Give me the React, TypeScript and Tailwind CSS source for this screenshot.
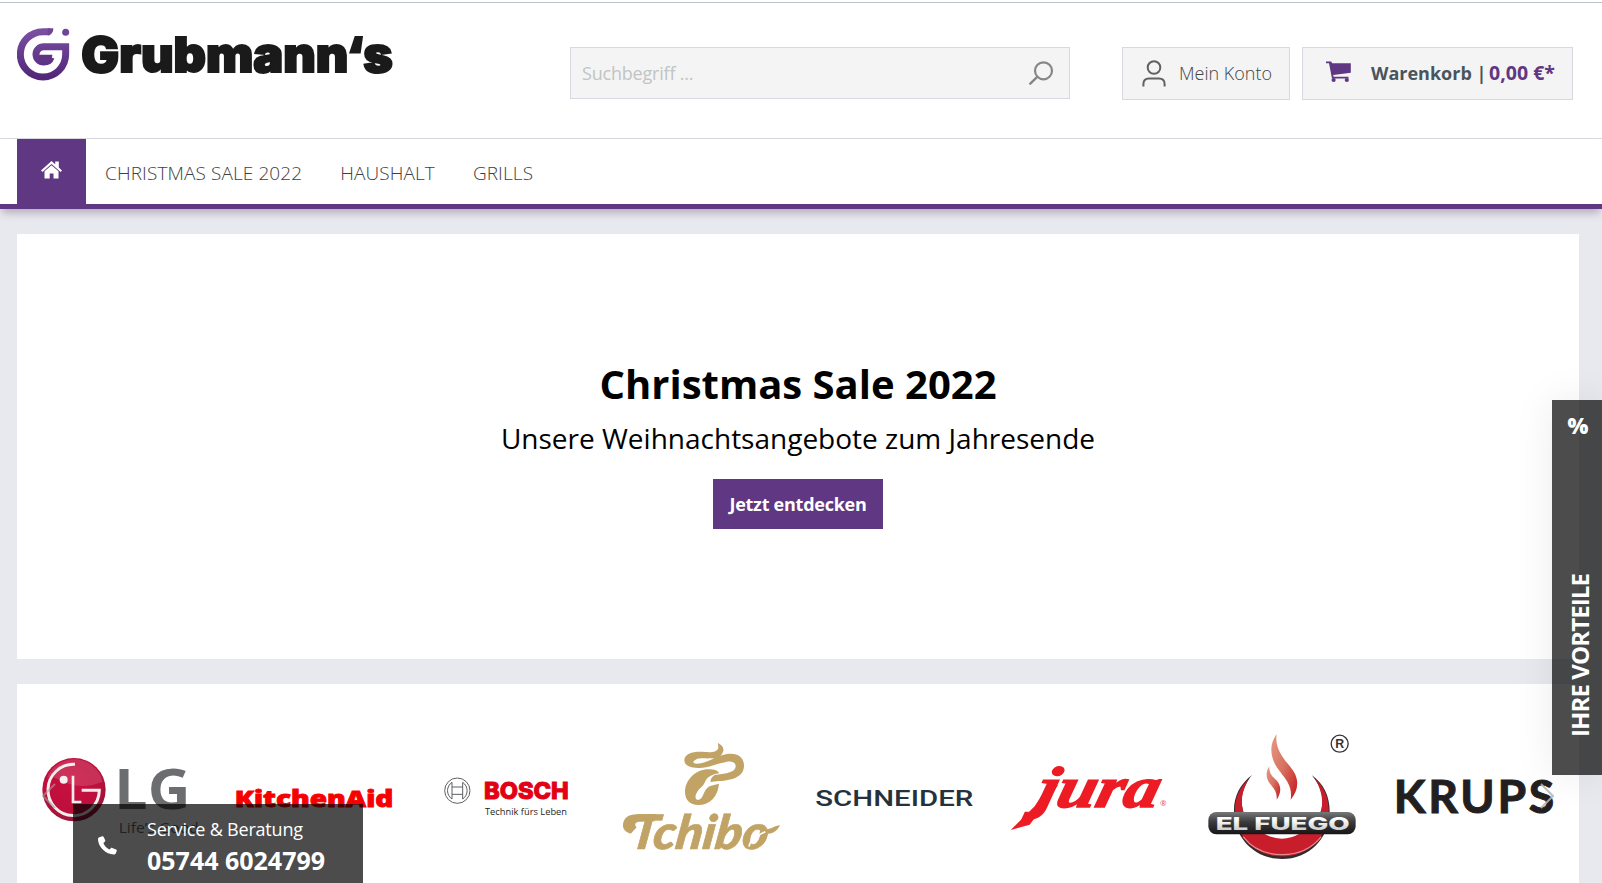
import type { ReactNode } from "react";

const navItems = ["CHRISTMAS SALE 2022", "HAUSHALT", "GRILLS"];

function GrubmannsLogo() {
  return (
    <svg viewBox="0 0 1140 180" className="h-[60px] w-[380px]" aria-label="Grubmann's">
      <defs>
        <linearGradient id="logo" x1="0" y1="0" x2="0" y2="1">
          <stop offset="0" stopColor="#7a4ea0" />
          <stop offset="1" stopColor="#52277a" />
        </linearGradient>
      </defs>
      <path
        d="M98 20H78a68 68 0 1 0 68 68V65H80a23 23 0 1 0 0 46c12 0 19-5 22-14"
        fill="none"
        stroke="url(#logo)"
        strokeWidth="21"
      />
      <path fill="#6f4596" d="M92 9.500h17c0 13-7 21-17 21z" />
      <path fill="#5f3385" d="M68 89h38c0 6-2 11-5 15H68c-3-5-3-11 0-15z" />
      <circle cx="146" cy="22" r="10.500" fill="#6f4596" />
      <text
        x="193"
        y="142"
        textLength="934"
        lengthAdjust="spacingAndGlyphs"
        fill="#1a1a1a"
        stroke="#1a1a1a"
        strokeWidth="6"
        className="font-['Inter',sans-serif] text-[144px] font-black"
      >
        Grubmann‘s
      </text>
    </svg>
  );
}

function HomeIcon() {
  return (
    <svg viewBox="0 0 21 18" className="h-[18px] w-[21px]" fill="#fff">
      <path d="M10.500 0 14.200 3.200V.5h3.600v6l3.200 2.900-1.400 1.500-9.100-8-9.100 8L0 9.400z" />
      <path d="M10.500 4.200l7 6.100V17.500h-5v-5H8.700v5H3.500v-7.200z" />
    </svg>
  );
}

function UserIcon() {
  return (
    <svg viewBox="0 0 24 27" className="h-[27px] w-6" fill="none" stroke="#5f6163" strokeWidth="2">
      <circle cx="12" cy="7.500" r="6.300" />
      <path d="M1.400 26.500v-2.500c0-3.500 2-5.500 5.500-5.500h10.200c3.500 0 5.500 2 5.500 5.500v2.500" />
    </svg>
  );
}

function CartIcon() {
  return (
    <svg viewBox="0 0 25 22" className="h-[22px] w-[25px]" fill="#5f3782">
      <path d="M0 .5h5.300l.7 1.800h18.800v9.400L7.200 14l.4 1.700h14.900v1.800H6L3 2.300H0z" />
      <circle cx="7.600" cy="19" r="2.100" />
      <circle cx="20.800" cy="19" r="2.100" />
    </svg>
  );
}

function SearchIcon() {
  return (
    <svg viewBox="0 0 25 24" className="h-6 w-[25px]" fill="none" stroke="#868686" strokeWidth="2.200">
      <circle cx="14.500" cy="9.800" r="8.500" />
      <path d="M8 16.200 1.300 22.700" strokeWidth="2.400" strokeLinecap="round" />
    </svg>
  );
}

function PhoneIcon() {
  return (
    <svg viewBox="0 0 19 19" className="size-[19px]" fill="#fff">
      <path d="M1.400 1.300 4.200.2c.7-.2 1.200 0 1.500.7l1.500 3.300c.2.600.1 1.100-.4 1.500L5.400 7c1 2.800 3 5.100 6 6.500l1.500-1.300c.4-.4.900-.4 1.400-.2l3.800 1.600c.6.300.8.700.6 1.300l-.8 2.300c-.2.700-.8 1.100-1.500 1.200C8.500 18.800.2 11.500 0 3.300c0-.9.500-1.700 1.400-2z" />
    </svg>
  );
}

function Brand({ box, children }: { box: string; children: ReactNode }) {
  return (
    <svg viewBox={box} className="size-[157px] shrink-0 overflow-visible">
      {children}
    </svg>
  );
}

function Brands() {
  return (
    <div className="flex justify-between px-[25px] pt-9">
      <Brand box="66 -30 471 471">
        <defs>
          <radialGradient id="lg" cx=".45" cy=".4" r=".65">
            <stop offset="0" stopColor="#c9103f" />
            <stop offset=".7" stopColor="#bd0f3c" />
            <stop offset="1" stopColor="#8f1438" />
          </radialGradient>
        </defs>
        <circle cx="162" cy="179" r="95" fill="url(#lg)" />
        <path d="M80 145a88 88 0 0 1 168 10q-70 30-140-10-20-8-28 0" fill="#fff" opacity=".14" />
        <g fill="none" stroke="#f2eeee" strokeWidth="9">
          <path d="M165 103a77 77 0 1 0 73 78H185" />
          <path d="M159 137v79h25" strokeWidth="8" />
        </g>
        <circle cx="131" cy="149" r="12" fill="#f5f1f1" />
        <text x="283" y="238" textLength="228" lengthAdjust="spacingAndGlyphs" fill="#6b6d70" className="font-['Open_Sans',sans-serif] text-[169px] font-bold">LG</text>
        <text x="296" y="310" textLength="240" lengthAdjust="spacingAndGlyphs" fill="#6b6d70" className="font-['Open_Sans',sans-serif] text-[46px]">Life’s Good</text>
      </Brand>

      <Brand box="647 -30 471 471">
        <text x="643" y="230" textLength="476" lengthAdjust="spacingAndGlyphs" fill="#f80000" stroke="#f80000" strokeWidth="2.500" className="font-['Open_Sans',sans-serif] text-[66px] font-extrabold">KitchenAid</text>
      </Brand>

      <Brand box="27 -30 471 471">
        <g fill="none" stroke="#5d6164" strokeWidth="3">
          <circle cx="112" cy="182" r="38" />
          <path d="M96 157a30 30 0 0 0 0 50zM128 157a30 30 0 0 1 0 50zM96 171h32M96 193h32" />
        </g>
        <text x="192" y="207" textLength="254" lengthAdjust="spacingAndGlyphs" fill="#e20015" stroke="#e20015" strokeWidth="3" className="font-['Inter',sans-serif] text-[70px] font-extrabold">BOSCH</text>
        <text x="195" y="255" textLength="246" lengthAdjust="spacingAndGlyphs" fill="#1c1f22" className="font-['Open_Sans',sans-serif] text-[28px]">Technik fürs Leben</text>
      </Brand>

      <Brand box="608 -30 471 471">
        <g fill="#c2a366">
          <path d="M893 39c14 8 20 17 14 29-5 11-17 17-36 17-20 1-33-2-45 4-10 5-9 12 3 12 30 0 55-22 91-29 31-5 51 9 51 35 0 31-31 44-76 46l-24 3c-2-7 4-16 12-21l27-4c24-3 36-11 36-23 0-11-12-16-29-12-29 5-53 19-84 18-25-1-41-8-41-23 0-22 30-28 64-25 19 2 37-2 38-13 1-5-2-8-1-14z" />
          <path d="M865 118c17 0 29 4 31 12-25 4-37 14-41 24-6 16-16 19-21 27-8 11-11 20-6 27 6 5 15 0 20-12 6-14 12-25 22-28l26-7c-3 36-25 64-63 64-23 0-39-15-39-39 0-36 32-68 71-68z" />
          <path d="M608 285c1-22 19-34 47-32l53-1-5 22-43 1c-15 0-19 7-11 17l-18 19c-14-4-24-13-23-26z" />
          <path d="M1030 297c22 4 31-10 49-11-7 14-19 25-35 25l-28 3c2-8 6-14 14-17z" />
        </g>
        <g transform="translate(0 358) skewX(-8)">
          <text x="626" y="0" textLength="414" lengthAdjust="spacingAndGlyphs" fill="#c2a366" stroke="#c2a366" strokeWidth="2" className="font-['Lato',sans-serif] text-[142px] font-black italic">Tchibo</text>
        </g>
        <path d="M986 350c4-22 15-21 21-31l28-14" stroke="#fff" strokeWidth="5" fill="none" />
      </Brand>

      <Brand box="49 -30 471 471">
        <text x="47" y="228" textLength="474" lengthAdjust="spacingAndGlyphs" fill="#25323d" className="font-['Roboto',sans-serif] text-[64px] font-medium">SCHNEIDER</text>
      </Brand>

      <Brand box="630 -30 471 471">
        <g fill="#ed1c24" transform="translate(0 230) skewX(-14)">
          <text x="704" y="0" textLength="364" lengthAdjust="spacingAndGlyphs" stroke="#ed1c24" strokeWidth="5" className="font-['Liberation_Serif',serif] text-[174px] font-bold italic">jura</text>
        </g>
        <path fill="#ed1c24" d="M632 300l72-71 41-64h29l-43 63-42 56z" />
        <text x="1080" y="229" fill="#ed4a50" className="font-['Open_Sans',sans-serif] text-[24px]">®</text>
      </Brand>

      <Brand box="70 0 471 471">
        <defs>
          <linearGradient id="flame" x1="0" y1="0" x2="1" y2="1">
            <stop offset="0" stopColor="#e59a84" />
            <stop offset=".5" stopColor="#d8705f" />
            <stop offset="1" stopColor="#c4161c" />
          </linearGradient>
          <linearGradient id="band" x1="0" y1="0" x2="0" y2="1">
            <stop offset="0" stopColor="#77797b" />
            <stop offset=".45" stopColor="#3a3a3c" />
            <stop offset="1" stopColor="#171516" />
          </linearGradient>
          <linearGradient id="chrome" x1="0" y1="0" x2="0" y2="1">
            <stop offset=".3" stopColor="#fff" />
            <stop offset="1" stopColor="#b8babc" />
          </linearGradient>
        </defs>
        <path fill="#332a2b" d="M217 165c-37 28-55 66-54 110 1 80 64 142 144 142s143-62 143-142c0-46-18-84-54-110 32 39 43 80 21 125-18 41-59 66-110 66s-92-25-110-66c-20-43-11-87 20-125z" />
        <path fill="#c81e2b" d="M210 174c-31 28-45 60-44 101 2 75 63 134 141 134s139-59 140-134c1-40-14-75-42-100 22 36 30 75 14 113-18 43-61 68-112 68s-94-25-112-68c-16-39-9-78 15-114z" />
        <path fill="#c81e2b" d="M186 340h242c-24 40-68 64-121 64s-97-24-121-64z" />
        <path d="M190 350c28 36 67 54 117 54s90-19 118-54" fill="none" stroke="#e9868c" strokeWidth="4" />
        <path d="M250 340q57 32 112 0z" fill="#fff" />
        <path fill="url(#flame)" d="M291 42c-15 22-19 41-14 65 7 34 29 50 46 78 10 18 13 33 10 54 15-18 22-37 19-58-5-31-27-45-43-70-15-24-22-43-18-69z" />
        <path fill="url(#flame)" d="M269 139c-11 17-11 34 1 51 12 15 23 25 21 49 10-15 14-30 8-45-6-14-18-19-25-31-4-8-6-15-5-24z" />
        <rect x="86" y="276" width="442" height="67" rx="24" fill="url(#band)" />
        <text x="108" y="330" textLength="402" lengthAdjust="spacingAndGlyphs" fill="url(#chrome)" className="font-['Inter',sans-serif] text-[52px] font-extrabold">EL FUEGO</text>
        <circle cx="480" cy="71" r="25.500" fill="none" stroke="#333" strokeWidth="4" />
        <text x="467" y="84" fill="#333" className="font-['Liberation_Sans',sans-serif] text-[37px] font-bold">R</text>
      </Brand>

      <Brand box="651 0 471 471">
        <text x="641" y="280" textLength="490" lengthAdjust="spacingAndGlyphs" fill="#231f20" stroke="#231f20" strokeWidth="3" className="font-['Lato',sans-serif] text-[138px] font-bold tracking-[8px]">KRUPS</text>
      </Brand>
    </div>
  );
}

export default function App() {
  return (
    <div className="relative h-[883px] overflow-hidden bg-[#e8e9ee] font-['Open_Sans',sans-serif] text-[#5f6163]">
      <header className="flex h-[139px] items-start border-b border-[#d8d9de] bg-white">
        <div className="mt-0.5 flex w-full border-t border-[#b9c4cf] pl-[17px]">
          <div className="w-[553px] pt-[22px]">
            <GrubmannsLogo />
          </div>
          <div className="mt-11 flex h-[52px] w-[500px] items-center justify-between border border-[#d8d9e2] bg-[#f4f4f4] pr-[15px] pl-[11px]">
            <span className="text-lg tracking-[-0.2px] text-[#c1c4c4]">Suchbegriff ...</span>
            <SearchIcon />
          </div>
          <button className="mt-11 ml-[52px] flex h-[53px] w-[168px] items-center gap-[13px] border border-[#d8d9e0] bg-[#f4f4f4] pl-[19px]">
            <UserIcon />
            <span className="pb-px text-lg font-light whitespace-nowrap text-[#424446]">Mein Konto</span>
          </button>
          <button className="mt-11 ml-3 flex h-[53px] w-[271px] items-center border border-[#d8d9e0] bg-[#f4f4f4] pl-[23px]">
            <span className="pb-1">
              <CartIcon />
            </span>
            <span className="ml-5 pb-px text-lg font-bold whitespace-nowrap text-[#4a545b]">
              Warenkorb | <span className="-ml-0.5 text-[19.5px] text-[#5f3782]">0,00 €*</span>
            </span>
          </button>
        </div>
      </header>

      <nav className="relative flex h-[70px] border-b-5 border-[#5f3782] bg-white pl-[17px] shadow-[0_6px_8px_-2px_rgba(60,40,80,0.3)]">
        <a className="flex w-[69px] items-center justify-center bg-[#5f3782] pb-1">
          <HomeIcon />
        </a>
        <div className="flex items-center gap-[38px] pt-[3px] pl-[19px] text-[19px] font-light tracking-[0.1px] text-[#3e4042]">
          {navItems.map((item) => (
            <a key={item} className="whitespace-nowrap">
              {item}
            </a>
          ))}
        </div>
      </nav>

      <main className="flex flex-col gap-[25px] pt-[25px] pr-[23px] pl-[17px]">
        <section className="flex h-[425px] flex-col items-center bg-white pt-[122px] text-black">
          <h1 className="text-[40px] leading-[56px] font-bold whitespace-nowrap">Christmas Sale 2022</h1>
          <p className="mt-1.5 text-[28px] leading-[40px] whitespace-nowrap">Unsere Weihnachtsangebote zum Jahresende</p>
          <button className="mt-[21px] h-[50px] w-[170px] bg-[#5f3782] text-lg font-bold tracking-[-0.25px] whitespace-nowrap text-white">
            Jetzt entdecken
          </button>
        </section>
        <section className="relative h-[220px] bg-white">
          <Brands />
          <svg viewBox="0 0 14 28" className="absolute top-[98px] left-[25px] h-7 w-3.5" fill="none" stroke="#a3a3a3" strokeOpacity=".6" strokeWidth="2">
            <path d="M13 2 1 14l12 12" />
          </svg>
          <svg viewBox="0 0 14 28" className="absolute top-[98px] right-[25px] h-7 w-3.5" fill="none" stroke="#b5b5b5" strokeOpacity=".85" strokeWidth="2">
            <path d="M1 2l12 12L1 26" />
          </svg>
        </section>
      </main>

      <aside className="absolute top-[400px] right-0 flex h-[375px] w-[50px] flex-col items-center justify-between bg-black/70 pt-[9px] pb-[38px] text-white shadow-[0_0_40px_rgba(0,0,0,0.08)]">
        <span className="pl-px text-[22px] font-extrabold tracking-[-1px]">%</span>
        <span className="rotate-180 pr-1.5 text-2xl font-bold tracking-[-0.9px] whitespace-nowrap [writing-mode:vertical-rl]">IHRE VORTEILE</span>
      </aside>

      <div className="absolute bottom-0 left-[73px] flex h-[79px] w-[290px] items-center bg-black/70 pl-[25px] text-white">
        <div className="pt-1">
          <PhoneIcon />
        </div>
        <div className="ml-[30px] whitespace-nowrap">
          <p className="pt-1 text-lg leading-[26px] tracking-[-0.2px]">Service &amp; Beratung</p>
          <p className="mt-0.5 text-[25px] leading-8 font-bold">05744 6024799</p>
        </div>
      </div>
    </div>
  );
}
